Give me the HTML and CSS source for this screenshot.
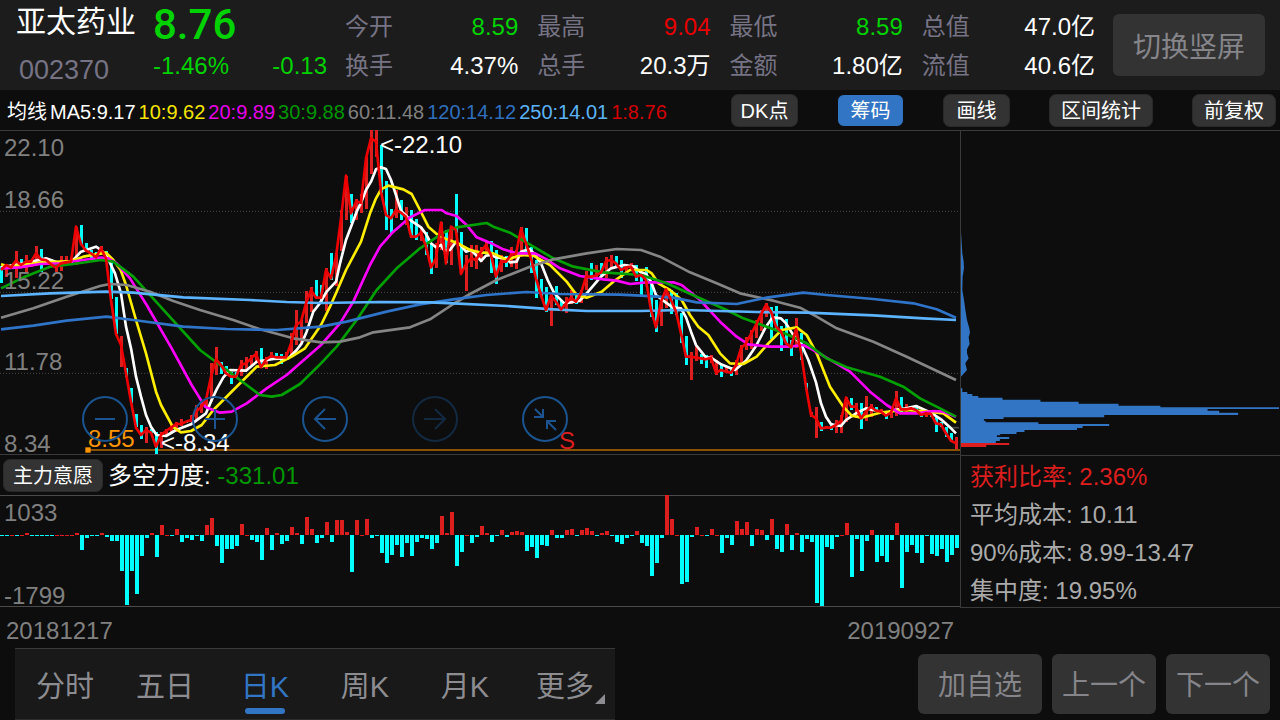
FILE: index.html
```html
<!DOCTYPE html>
<html lang="zh-CN">
<head>
<meta charset="utf-8">
<meta name="viewport" content="width=device-width, initial-scale=1">
<title>亚太药业 002370</title>
<link rel="stylesheet" href="styles.css">
</head>
<body>
<div class="page">
  <header class="quote">
    <div class="stock">
      <h1 class="stock-name">亚太药业</h1>
      <span class="stock-code">002370</span>
    </div>
    <div class="price">
      <strong class="price-now">8.76</strong>
      <div class="price-change"><span>-1.46%</span><span>-0.13</span></div>
    </div>
    <dl class="stats">
      <div class="stat"><dt>今开</dt><dd class="down">8.59</dd></div>
      <div class="stat"><dt>最高</dt><dd class="up">9.04</dd></div>
      <div class="stat"><dt>最低</dt><dd class="down">8.59</dd></div>
      <div class="stat"><dt>总值</dt><dd>47.0亿</dd></div>
      <div class="stat"><dt>换手</dt><dd>4.37%</dd></div>
      <div class="stat"><dt>总手</dt><dd>20.3万</dd></div>
      <div class="stat"><dt>金额</dt><dd>1.80亿</dd></div>
      <div class="stat"><dt>流值</dt><dd>40.6亿</dd></div>
    </dl>
    <button class="btn btn-rotate" type="button">切换竖屏</button>
  </header>

  <div class="toolbar">
    <div class="averages">
      <span>均线</span>
      <span>MA5:9.17</span>
      <span class="ma10">10:9.62</span>
      <span class="ma20">20:9.89</span>
      <span class="ma30">30:9.88</span>
      <span class="ma60">60:11.48</span>
      <span class="ma120">120:14.12</span>
      <span class="ma250">250:14.01</span>
      <span class="ma1">1:8.76</span>
    </div>
    <div class="tools">
      <button class="tool tool-short" type="button">DK点</button>
      <button class="tool tool-short tool-on" type="button">筹码</button>
      <button class="tool tool-short" type="button">画线</button>
      <button class="tool" type="button">区间统计</button>
      <button class="tool" type="button">前复权</button>
    </div>
  </div>

  <main class="board">
    <section class="left">
      <div class="kline">
        <svg class="plot" id="kline" viewBox="0 0 2880 975" preserveAspectRatio="none" aria-hidden="true"></svg>
        <span class="axis y1">22.10</span>
        <span class="axis y2">18.66</span>
        <span class="axis y3">15.22</span>
        <span class="axis y4">11.78</span>
        <span class="axis y5">8.34</span>
        <span class="mark mark-high">&lt;-22.10</span>
        <span class="mark mark-low">&lt;-8.34</span>
        <span class="mark mark-cost">8.55</span>
        <span class="mark mark-sell">S</span>
        <div class="controls">
          <button class="round" type="button" aria-label="缩小"><svg viewBox="0 0 46 46"><circle cx="23" cy="23" r="22"/><path d="M13 23H33"/></svg></button>
          <button class="round" type="button" aria-label="放大"><svg viewBox="0 0 46 46"><circle cx="23" cy="23" r="22"/><path d="M13 23H33M23 13V33"/></svg></button>
          <button class="round" type="button" aria-label="左移"><svg viewBox="0 0 46 46"><circle cx="23" cy="23" r="22"/><path d="M34 23H13M23 13L13 23L23 33"/></svg></button>
          <button class="round" type="button" aria-label="右移" disabled><svg viewBox="0 0 46 46"><circle cx="23" cy="23" r="22"/><path d="M12 23H33M23 13L33 23L23 33"/></svg></button>
          <button class="round" type="button" aria-label="收起"><svg viewBox="0 0 46 46"><circle cx="23" cy="23" r="22"/><path d="M13 13L21 21M21 13V21H12M34 34L25 25M25 33V25H34"/></svg></button>
        </div>
      </div>
      <div class="indicator">
        <button class="tool tool-name" type="button">主力意愿</button>
        <span class="indicator-value">多空力度: <em>-331.01</em></span>
      </div>
      <div class="force">
        <svg class="plot" id="force" viewBox="0 0 960 111" preserveAspectRatio="none" aria-hidden="true"></svg>
        <span class="axis force-max">1033</span>
        <span class="axis force-min">-1799</span>
      </div>
      <div class="dates"><time>20181217</time><time>20190927</time></div>
    </section>
    <aside class="right">
      <div class="chips">
        <svg class="plot" viewBox="0 0 960 975" preserveAspectRatio="none" aria-hidden="true">
          <path class="chip-blue" d="M0 305L2 340L4 370L8 395L9 415L5 440L4 480L9 510L14 545L18 570L25 595L27 608L23 622L26 642L18 658L18 670L23 685L13 700L18 720L2 738L0 740Z"/>
          <path class="chip-blue" d="M0 775H4V786H19V792H34V798H52V803H125V809H239V815H354V821H474V827H600V832H957V837H742V842H777V848H834V855H431V862H128V867H69V872H74V877H233V882H446V888H366V894H349V900H191V906H167V912H118V916H108V921H145V927H117V933H105V939H0Z"/>
          <path class="chip-red" d="M0 939H145V945H76V951H0Z"/>
        </svg>
      </div>
      <ul class="chip-info">
        <li class="profit">获利比率: 2.36%</li>
        <li>平均成本: 10.11</li>
        <li>90%成本: 8.99-13.47</li>
        <li>集中度: 19.95%</li>
      </ul>
    </aside>
  </main>

  <footer class="bottom">
    <nav class="tabs">
      <button class="tab" type="button">分时</button>
      <button class="tab" type="button">五日</button>
      <button class="tab tab-on" type="button">日K</button>
      <button class="tab" type="button">周K</button>
      <button class="tab" type="button">月K</button>
      <button class="tab tab-more" type="button">更多</button>
    </nav>
    <div class="actions">
      <button class="btn btn-add" type="button">加自选</button>
      <button class="btn" type="button">上一个</button>
      <button class="btn" type="button">下一个</button>
    </div>
  </footer>
</div>
<script src="chart.js"></script>
</body>
</html>
```
FILE: styles.css
```css
* { box-sizing: border-box; }

body {
  margin: 0;
  background: #0d0d0d;
  color: #fff;
  font-family: "Liberation Sans", "Noto Sans CJK SC", sans-serif;
  font-weight: 400;
  font-size: 24px;
  line-height: 30px;
}

button {
  margin: 0;
  padding: 0;
  border: 0;
  font: inherit;
  color: inherit;
  background: none;
  white-space: nowrap;
}

.page {
  display: flex;
  flex-direction: column;
  min-height: 100vh;
}

/* quote header */
.quote {
  display: flex;
  height: 90px;
  padding: 0 15px 0 16px;
  background: #1c1c1c;
}
.stock { width: 137px; }
.stock-name {
  margin: 4px 0 0;
  font-size: 30px;
  line-height: 36px;
  font-weight: 400;
}
.stock-code {
  display: block;
  margin: 14px 0 0 3px;
  font-size: 27px;
  line-height: 32px;
  color: #767384;
}
.price {
  width: 174px;
  color: #00d200;
}
.price-now {
  display: block;
  margin-top: 2px;
  font-family: Roboto, sans-serif;
  font-size: 42px;
  line-height: 46px;
  font-weight: 500;
}
.price-change {
  display: flex;
  justify-content: space-between;
  margin-top: 3px;
}
.stats {
  flex: 1;
  display: grid;
  grid-template-columns: repeat(4, 1fr);
  grid-auto-rows: 39px;
  column-gap: 19px;
  margin: 7px 18px 0;
}
.stat {
  display: flex;
  justify-content: space-between;
  line-height: 39px;
}
.stat dt { color: #767384; }
.stat dd { margin: 0; }
.stat .down { color: #00d200; }
.stat .up { color: #e60000; }

.btn {
  flex: none;
  width: 104px;
  height: 60px;
  padding-top: 5px;
  border-radius: 6px;
  background: #333;
  color: #85858a;
  font-size: 28px;
}
.btn-add { width: 124px; }
.btn-rotate {
  width: 152px;
  height: 62px;
  margin-top: 14px;
}

/* moving averages and tools */
.toolbar {
  display: flex;
  justify-content: space-between;
  align-items: center;
  height: 40px;
  padding: 0 4px 0 7px;
  font-size: 20px;
}
.averages {
  display: flex;
  gap: 3px;
  white-space: nowrap;
  padding-top: 4px;
}
.ma10 { color: #f5e600; }
.ma20 { color: #e600e6; }
.ma30 { color: #009600; }
.ma60 { color: #808080; }
.ma120 { color: #2f6fbd; }
.ma250 { color: #5cb3f5; }
.ma1 { color: #d20000; }
.tools { display: flex; gap: 39px; }
.tool {
  height: 33px;
  padding: 1px 11px 0;
  border: 1px solid #292929;
  border-radius: 7px;
  background: #333;
  font-size: 20px;
}
.tool-short { width: 67px; padding: 1px 0 0; }
.tool-name { padding: 1px 9px 0; }
.tool-on { background: #3275c5; border-color: #0d0d0d; }

/* charts */
.board {
  flex: 1;
  display: grid;
  grid-template-columns: 3fr 1fr;
}
.left, .right {
  display: flex;
  flex-direction: column;
}
.kline, .chips {
  position: relative;
  flex: 1;
  min-height: 325px;
  border-top: 1px solid #3a3a3a;
}
.plot {
  position: absolute;
  inset: -1px 0 0;
  width: 100%;
  height: calc(100% + 1px);
}
.plot path { fill: none; }
.plot .candles { shape-rendering: crispEdges; }
.plot .chip-blue { fill: #3275c5; }
.plot .chip-red { fill: #dc1e1e; }
.plot .lines { stroke-width: 8; stroke-linejoin: round; }
.axis, .mark {
  position: absolute;
  white-space: nowrap;
}
.axis { left: 4px; color: #808080; }
.y1 { top: 2px; }
.y2 { top: 54px; }
.y3 { top: 135px; }
.y4 { top: 216px; }
.y5 { bottom: -4px; }
.mark-high { left: 380px; top: -1px; }
.mark-low { left: 161px; bottom: -3px; }
.mark-cost { left: 88px; bottom: 1px; color: #ff9500; }
.mark-sell { left: 559px; bottom: -1px; color: #dc1e1e; }

.controls {
  position: absolute;
  left: 82px;
  bottom: 13px;
  display: flex;
  gap: 64px;
}
.round { width: 46px; height: 46px; }
.round svg {
  display: block;
  fill: none;
  stroke: #1b5490;
  stroke-width: 2;
}
.round:disabled { opacity: .4; }

.indicator {
  display: flex;
  align-items: center;
  gap: 5px;
  height: 41px;
  margin-top: -1px;
  padding-left: 3px;
  border-top: 1px solid #3a3a3a;
}
.indicator-value { padding-top: 2px; }
.indicator em {
  font-style: normal;
  color: #009600;
}
.force {
  position: relative;
  height: 112px;
  border-top: 1px solid #4a4a4a;
  border-bottom: 1px solid #4a4a4a;
}
.force-max { top: 2px; }
.force-min { bottom: -5px; }
.dates {
  display: flex;
  justify-content: space-between;
  height: 41px;
  padding: 9px 6px 0;
  color: #808080;
}

.chips, .chip-info { border-left: 1px solid #3a3a3a; }
.chip-info {
  margin: 0 0 40px;
  padding: 2px 0 0 9px;
  height: 153px;
  border-top: 1px solid #3a3a3a;
  border-bottom: 1px solid #3a3a3a;
  list-style: none;
  line-height: 38px;
  color: #aaa;
  white-space: nowrap;
}
.profit { color: #dc1e1e; }

/* bottom bar */
.bottom {
  display: flex;
  justify-content: space-between;
  height: 72px;
  padding: 0 10px 0 15px;
}
.tabs {
  display: grid;
  grid-template-columns: repeat(6, 100px);
  background: #191919;
  border-top: 1px solid #3a3a3a;
  border-bottom: 1px solid #2c2c2c;
}
.tab {
  position: relative;
  padding-top: 5px;
  color: #8c8c91;
  font-size: 29px;
}
.tab-on { color: #3275c5; }
.tab-on::after {
  content: "";
  position: absolute;
  left: 30px;
  bottom: 5px;
  width: 40px;
  height: 6px;
  border-radius: 3px;
  background: #3275c5;
}
.tab-more::after {
  content: "";
  position: absolute;
  right: 10px;
  bottom: 15px;
  border-left: 10px solid transparent;
  border-bottom: 10px solid #8c8c91;
}
.actions {
  display: flex;
  align-items: center;
  gap: 10px;
  padding-bottom: 1px;
}
```
FILE: chart.js
```js
// Close per trading day, in plot units (15 units per day, y downwards).
const close = [
  420,405,412,392,405,395,395,370,388,390,403,413,400,397,395,290,342,362,370,382,355,385,510,612,645,730,815,893,915,900,908,950,
  915,903,893,882,882,875,870,845,832,810,740,688,705,730,740,740,705,700,685,672,712,688,678,682,682,682,640,585,575,520,480,503,
  503,420,445,380,265,137,250,215,218,85,25,35,185,255,265,240,248,260,320,320,308,350,412,385,278,400,290,300,432,402,385,390,
  365,345,375,440,395,395,375,372,297,340,385,445,495,540,497,515,538,520,503,515,490,440,440,437,428,393,390,400,420,412,410,440,
  435,450,540,592,515,478,510,545,610,680,680,683,685,688,683,728,720,725,728,705,655,640,612,585,553,525,545,590,605,640,652,597,
  665,770,855,865,895,893,893,885,872,803,830,830,865,845,830,842,845,857,848,805,838,838,835,840,855,850,852,880,883,910,932,940
];

// Day ranges: colour letter, top, bottom.
const candles = `c408-460 r402-440 r402-415 r363-443 c388-408 r375-430 r390-410 r348-392 c357-425 c383-405 c388-405 r400-425 r378-422 r378-400 r385-397 r290-405
c285-345 c340-365 c360-388 c365-388 r348-375 c363-390 c390-508 c500-612 r617-712 c714-740 c773-820 c852-890 c885-927 r890-940 c898-910 c905-972
r905-955 r898-915 r885-910 r875-905 r868-888 c872-880 r855-875 r825-870 r815-850 r800-835 r700-815 r651-735 c695-732 c708-738 c725-762 c725-745
r690-738 r680-720 r675-705 r663-700 c654-715 r682-718 r665-690 c670-688 c672-702 r665-685 r610-675 r540-645 r570-640 r483-580 r470-545 c450-505
c465-515 r415-543 c369-450 r370-467 r240-362 r137-270 c192-279 r207-270 r192-250 r80-237 r0-132 r0-80 c45-190 c153-300 c237-312 r180-265
c210-270 r232-285 c240-325 c267-330 r290-333 c305-375 c340-432 r340-414 r276-360 c300-400 r287-405 c192-310 c306-430 r375-483 r345-410 r345-417
r350-395 r335-370 c333-430 c360-462 r375-425 c378-410 r350-412 r360-417 r291-380 c294-365 c350-430 c390-503 c447-500 c471-545 r490-588 c468-525
c510-540 r500-549 r480-522 c495-522 r480-518 r422-480 c399-450 r405-445 c399-440 r380-445 r374-410 c378-415 c390-443 r402-425 r400-420 c405-453
c430-495 c411-460 c455-560 c510-606 r510-587 r470-535 c480-552 c489-555 c548-640 c617-705 r665-750 r648-693 c672-702 c675-714 r675-700 r690-735
c705-741 r712-728 c710-738 r690-735 r645-703 r622-660 r600-658 r570-625 r540-603 r519-560 c530-628 c528-600 c588-663 c567-640 c630-678 r564-655
c610-690 c760-780 r845-860 r830-923 c875-903 r888-898 c880-900 r870-909 r855-909 r800-875 c803-840 r818-865 c819-897 r798-873 r822-860 c832-845
r838-850 c845-867 r840-865 r783-858 c801-845 r822-845 r828-842 c825-845 c848-862 r845-860 c848-862 c860-906 c875-890 c890-920 c909-935 r920-958`.split(/\s+/);

const averages = [
  ["#ffffff", "3,412 60,402 108,392 138,385 175,398 215,395 243,365 288,350 303,360 320,378 345,430 363,490 378,590 393,655 408,740 423,800 438,855 453,890 470,915 498,918 528,900 573,883 618,850 635,810 650,778 670,742 690,720 738,722 770,695 820,687 865,685 890,660 905,640 920,605 940,545 958,522 980,485 1008,455 1020,400 1038,330 1070,245 1083,218 1098,180 1113,155 1128,118 1143,112 1158,117 1173,150 1188,195 1203,242 1233,272 1263,292 1278,312 1293,340 1308,352 1323,345 1333,362 1350,360 1368,335 1383,347 1398,365 1413,360 1428,375 1443,393 1458,377 1473,375 1488,382 1518,385 1530,397 1550,395 1563,365 1588,357 1603,372 1623,400 1643,450 1663,490 1693,520 1738,513 1760,490 1803,440 1833,415 1873,405 1903,410 1920,425 1938,432 1953,455 1968,495 1998,518 2018,532 2043,535 2058,562 2073,605 2088,645 2118,683 2133,683 2163,703 2205,720 2238,692 2268,648 2298,590 2318,562 2343,565 2358,580 2383,620 2405,645 2425,690 2448,757 2463,820 2478,860 2493,883 2523,888 2538,870 2568,850 2598,835 2633,843 2658,850 2683,840 2718,835 2748,828 2793,848 2823,868 2848,890 2868,910"],
  ["#ffee00", "3,403 30,410 120,398 180,395 215,393 250,380 318,368 340,390 362,420 378,465 408,570 438,670 468,785 483,825 518,890 543,907 573,903 605,885 640,840 700,780 770,710 825,705 875,680 915,655 963,585 990,530 1010,485 1038,420 1083,335 1110,250 1128,205 1143,178 1165,167 1210,178 1235,192 1260,240 1285,290 1310,312 1340,328 1370,338 1410,360 1440,367 1480,370 1520,390 1560,375 1600,377 1650,405 1700,455 1730,495 1760,503 1805,485 1840,455 1890,420 1940,420 1955,430 1975,460 2010,480 2045,510 2070,555 2095,590 2125,615 2160,670 2190,700 2230,702 2270,680 2305,640 2345,600 2390,592 2420,615 2450,670 2490,770 2530,830 2555,857 2585,863 2640,848 2710,840 2770,843 2830,850 2868,878"],
  ["#ff00ff", "3,415 60,412 120,402 180,400 250,390 303,383 325,385 350,400 390,445 440,525 515,655 575,765 615,830 660,848 695,845 740,820 800,775 860,735 963,645 1020,580 1060,515 1110,405 1140,350 1175,310 1230,262 1275,240 1325,240 1340,250 1370,258 1400,285 1430,322 1470,338 1510,358 1550,370 1605,370 1640,388 1680,415 1740,438 1810,448 1850,452 1890,462 1940,457 2020,457 2045,465 2100,510 2160,575 2210,620 2245,643 2310,650 2370,650 2410,645 2440,660 2500,695 2550,725 2610,785 2660,825 2700,850 2750,850 2800,843 2830,845 2868,860"],
  ["#00a000", "3,475 75,440 150,410 220,402 303,390 340,395 400,440 500,550 600,660 680,720 740,765 780,795 815,800 845,795 900,762 963,700 1010,650 1070,570 1130,480 1190,415 1260,355 1330,308 1370,292 1460,279 1480,290 1530,308 1580,338 1660,385 1720,410 1810,427 1923,435 2000,460 2100,505 2180,540 2230,565 2300,590 2350,608 2420,640 2480,685 2540,712 2640,740 2710,770 2760,805 2820,835 2868,860"],
  ["#858585", "3,563 100,535 200,500 300,468 330,462 380,465 450,485 520,513 600,540 700,570 780,598 880,625 963,637 1020,635 1080,622 1120,607 1230,592 1290,568 1360,522 1410,492 1490,450 1590,410 1660,388 1760,370 1850,357 1923,360 1980,380 2070,427 2150,460 2220,490 2320,512 2400,533 2450,560 2510,595 2620,635 2720,680 2868,750"],
  ["#2f74c8", "3,598 100,587 200,572 320,560 400,570 550,590 680,597 830,600 963,590 1040,575 1160,545 1260,523 1360,508 1460,495 1580,486 1680,492 1860,494 1923,497 2020,503 2090,517 2210,522 2300,503 2410,488 2480,495 2620,507 2740,520 2810,538 2868,563"],
  ["#5cb3ff", "3,498 150,490 320,485 400,488 550,502 750,510 860,516 963,519 1140,516 1290,517 1360,520 1520,528 1660,538 1760,543 1920,543 2050,540 2270,546 2420,548 2620,556 2770,565 2868,570"]
];

const force = [
  -1,-1,1,-1,1,2,-1,-1,-1,-1,-1,1,1,1,1,2,-15,-3,-1,-1,2,-2,-6,-6,-36,-70,-36,-59,-21,-3,2,-22,
  10,1,-1,6,-7,-3,-5,-1,-6,10,17,-11,-28,-14,-14,-11,11,1,-5,-7,-25,7,-15,2,-9,-6,8,2,-9,18,6,-8,
  -3,13,-7,15,15,3,-37,15,1,16,-3,-1,-18,-28,-20,-10,-22,-8,-21,-7,-3,-4,-14,-8,19,2,23,-31,-17,1,-8,-2,
  9,2,-7,-1,5,-2,3,4,3,-16,-12,-23,-10,-11,5,-3,-3,5,6,-1,5,7,4,-1,2,4,-1,-7,-9,-3,-1,4,
  -8,-11,-41,-28,-3,40,16,1,-49,-47,-2,8,1,-1,6,1,-18,-3,-10,14,6,13,-11,6,5,-5,16,-14,-17,11,-15,2,
  -17,-4,-7,-68,-71,-12,-14,-2,1,12,-42,-4,-36,-6,5,-27,-21,-27,-5,12,-53,-17,-10,-18,-28,-1,-19,-21,-14,-27,-20,-13
];

const RED = "#dc1e1e";
const CYAN = "#00ffff";

function candlePath(letter) {
  return candles.map((item, i) => {
    if (item[0] !== letter) return "";
    const [top, bottom] = item.slice(1).split("-");
    return `M${i * 15} ${top}h9V${bottom}h-9z`;
  }).join("");
}

function forcePath(positive) {
  return force.map((value, i) => {
    if (value > 0 !== positive) return "";
    return value === 1 ? `M${i * 5} 40h4v1h-4z` : `M${i * 5} 40h4v${-value}h-4z`;
  }).join("");
}

const closeLine = close.map((y, i) => `${3 + i * 15},${y}`).join(" ");

document.getElementById("kline").innerHTML =
  `<path d="M0 244H2877M0 487H2877M0 730H2877" stroke="#4a4a4a" stroke-width="3" stroke-dasharray="3 6"/>
   <path d="M2845 893H2877" stroke="#4a4a4a" stroke-width="5"/>
   <path d="M264 960H2880" stroke="#8c5005" stroke-width="6"/>
   <path d="M256 960H272" stroke="#ff9500" stroke-width="16"/>
   <path class="candles" d="${candlePath("r")}" style="fill:${RED}"/>
   <path class="candles" d="${candlePath("c")}" style="fill:${CYAN}"/>
   <g class="lines" fill="none">` +
  averages.map(([color, points]) => `<polyline points="${points}" stroke="${color}"/>`).join("") +
  `<polyline points="${closeLine}" stroke="#ee0000"/></g>`;

document.getElementById("force").innerHTML =
  `<path class="candles" d="${forcePath(true)}" style="fill:${RED}"/><path class="candles" d="${forcePath(false)}" style="fill:${CYAN}"/>`;
```
